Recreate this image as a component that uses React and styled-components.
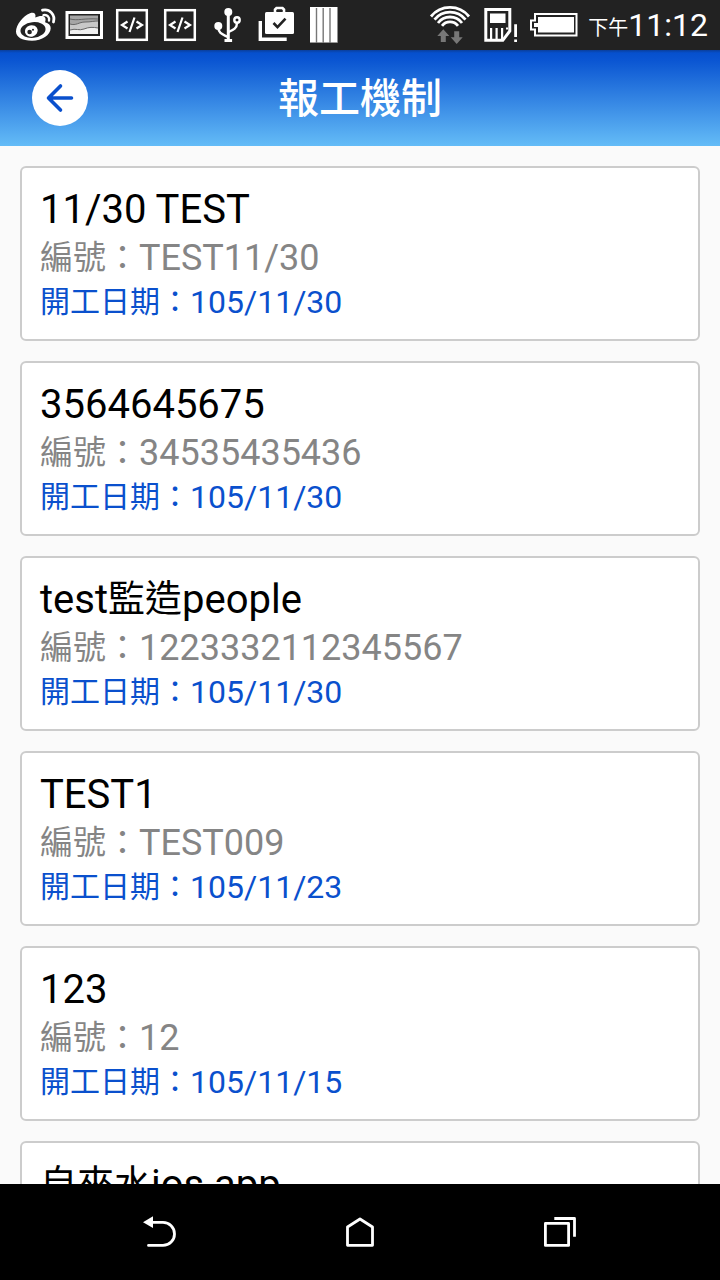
import React from "react";
import styled, { createGlobalStyle } from "styled-components";

const GlobalStyle = createGlobalStyle`
  *, *::before, *::after { box-sizing: border-box; }
  body {
    margin: 0;
    background: #fafafa;
    font-family: Roboto, "Noto Sans CJK TC", sans-serif;
  }
`;

const Screen = styled.div`
  display: flex;
  flex-direction: column;
  height: 100vh;
`;

const StatusBar = styled.div`
  display: flex;
  flex: none;
  align-items: center;
  justify-content: space-between;
  height: 50px;
  padding: 0 12px;
  background: #222;
  color: #fff;
`;

const StatusGroup = styled.div`
  display: flex;
  align-items: center;
`;

const StatusIcon = styled.svg`
  display: block;
  width: ${(p) => p.$width}px;
  height: 50px;
`;

const Clock = styled.time`
  margin-left: 8px;
  font-size: 32px;
  line-height: 50px;
  white-space: nowrap;
`;

const Cjk = styled.span`
  font-size: ${(p) => p.$size}px;
  line-height: 1;
  vertical-align: 1px;
`;

const Header = styled.header`
  display: grid;
  flex: none;
  grid-template-columns: 56px 1fr 56px;
  align-items: center;
  height: 96px;
  padding: 0 32px;
  background: linear-gradient(#0a3f9c 0, #0650ce 3px, #0a55d2 10px, #64bcf7 100%);
`;

const BackButton = styled.button`
  width: 56px;
  height: 56px;
  padding: 0;
  border: 0;
  border-radius: 50%;
  background: #fff;
  color: #0a50cd;
  cursor: pointer;

  svg { display: block; }
`;

const Title = styled.h1`
  margin: 0;
  padding-top: 2px;
  color: #fff;
  font-size: 41px;
  font-weight: 500;
  line-height: 56px;
  text-align: center;
`;

const List = styled.ul`
  display: flex;
  flex: 1;
  flex-direction: column;
  gap: 20px;
  min-height: 0;
  margin: 0;
  padding: 20px;
  overflow-y: auto;
  list-style: none;
  scrollbar-width: none;
`;

const Card = styled.a`
  display: block;
  padding: 18px 18px 17px;
  border: 2px solid #ccc;
  border-radius: 6px;
  background: #fff;
  color: #000;
  text-decoration: none;
`;

const CardTitle = styled.h2`
  margin: 0;
  font-size: 40px;
  font-weight: 400;
  line-height: 48px;
`;

const CardNumber = styled.p`
  margin: 0;
  color: #858585;
  font-size: 36px;
  line-height: 48px;
`;

const CardDate = styled.p`
  margin: 0;
  color: #0a50cd;
  font-size: 32px;
  line-height: 40px;
`;

const NavBar = styled.nav`
  display: flex;
  flex: none;
  height: 96px;
  padding: 0 60px;
  background: #000;
`;

const NavButton = styled.button`
  display: flex;
  flex: 1;
  align-items: center;
  justify-content: center;
  padding: 0;
  border: 0;
  background: none;
  color: #fff;
  cursor: pointer;
`;

const projects = [
  { title: "11/30 TEST", number: "TEST11/30", date: "105/11/30" },
  { title: "3564645675", number: "34535435436", date: "105/11/30" },
  { title: "test監造people", number: "1223332112345567", date: "105/11/30" },
  { title: "TEST1", number: "TEST009", date: "105/11/23" },
  { title: "123", number: "12", date: "105/11/15" },
  { title: "自來水ios app" },
];

// Sets runs of Han characters a little smaller than the Latin text around them.
function MixedText({ text, size }) {
  return text
    .split(/([\u4e00-\u9fff]+)/)
    .filter(Boolean)
    .map((run, i) =>
      /[\u4e00-\u9fff]/.test(run) ? (
        <Cjk key={i} $size={size}>{run}</Cjk>
      ) : (
        <React.Fragment key={i}>{run}</React.Fragment>
      )
    );
}

function WeiboIcon() {
  return (
    <StatusIcon $width={48} viewBox="0 0 48 50" fill="none" aria-hidden="true">
      <path
        d="M4 31.500C4 25 11 16 18 13.300c4-1.500 6.300.5 5.300 4.200 4-2 9-2.300 10 .5.600 1.700 0 3-.2 4.300 3.600 1 5.700 3 5.600 6C38.500 35 30 40.800 20 40.800S4 37 4 31.500z"
        fill="#fff"
      />
      <ellipse cx="21" cy="30" rx="12.600" ry="7.800" fill="#222" transform="rotate(-6 21 30)" />
      <ellipse cx="19.300" cy="30.900" rx="6.500" ry="5.700" fill="#fff" transform="rotate(-15 19.300 30.900)" />
      <circle cx="17.600" cy="32" r="2.300" fill="#222" />
      <circle cx="21" cy="29.800" r="1" fill="#222" />
      <path d="M30.500 10.200C37.500 8.500 43.500 14.500 41.500 22" stroke="#fff" strokeWidth="2.800" strokeLinecap="round" />
      <path d="M31.500 15.200c3.800-.8 6.300 2 5.500 5.300" stroke="#fff" strokeWidth="2.400" strokeLinecap="round" />
    </StatusIcon>
  );
}

function PictureIcon() {
  return (
    <StatusIcon $width={48} viewBox="0 0 48 50" aria-hidden="true">
      <rect x="7" y="12.500" width="34.500" height="25" fill="#222" stroke="#fff" strokeWidth="3" />
      <path d="M10 15.500h28V34H10z" fill="#a5a5a5" />
      <path d="M10 24c6 2 9-2 15-2s9-1 13-1v13H10z" fill="#c8c8c8" />
      <path d="M10 30c6-2 9 1 14-1s9-2 14-1v6H10z" fill="#eee" />
      <path d="M10 19c8 2 14-1 28 0M10 24c6 2 9-2 15-2s9-1 13-1M10 30c6-2 9 1 14-1s9-2 14-1" fill="none" stroke="#666" />
    </StatusIcon>
  );
}

function CodeIcon() {
  return (
    <StatusIcon $width={48} viewBox="0 0 48 50" fill="none" stroke="#fff" aria-hidden="true">
      <rect x="9.200" y="10.200" width="29.600" height="29.600" strokeWidth="2.500" />
      <path d="M19.500 21.500L14 25l5.500 3.500M26.500 17.500l-5 14.500M28.500 21.500L34 25l-5.500 3.500" strokeWidth="2.200" />
    </StatusIcon>
  );
}

function UsbIcon() {
  return (
    <StatusIcon $width={48} viewBox="0 0 48 50" fill="none" stroke="#fff" aria-hidden="true">
      <circle cx="24.300" cy="12" r="4" fill="#fff" stroke="none" />
      <circle cx="14.300" cy="26" r="4" fill="#fff" stroke="none" />
      <circle cx="33" cy="20" r="2.700" strokeWidth="2.400" />
      <path d="M24.300 12v28M20.500 40.500h7.600" strokeWidth="3" />
      <path d="M14.300 28c.5 6 5 6.500 9.500 9M33 23c0 5.500-4 7-8.500 9" strokeWidth="2.400" />
    </StatusIcon>
  );
}

function BagIcon() {
  return (
    <StatusIcon $width={48} viewBox="0 0 48 50" fill="none" aria-hidden="true">
      <path d="M8.300 21v18.300H34.700" stroke="#fff" strokeWidth="3.400" />
      <rect x="13" y="12" width="29" height="22" rx="1.500" fill="#fff" />
      <path d="M23 13V9.500l1.500-1.500h6l1.500 1.500V13" stroke="#fff" strokeWidth="2.600" />
      <path d="M21.500 23l4 4.200 8-8.500" stroke="#222" strokeWidth="2.600" />
    </StatusIcon>
  );
}

function StripesIcon() {
  return (
    <StatusIcon $width={48} viewBox="0 0 48 50" aria-hidden="true">
      <path d="M10 7h27.500v35.500H10z" fill="#fff" />
      <path d="M16.500 8v35M23.200 8v35M30 8v35" stroke="#777" strokeWidth="1.400" />
      <path d="M10 42.500h5.500M17.500 42.500h5M24 42.500h5M31 42.500h6.500" stroke="#999" />
    </StatusIcon>
  );
}

function WifiIcon() {
  return (
    <StatusIcon $width={52} viewBox="0 0 52 50" aria-hidden="true">
      <path
        d="M7 16.500A24.500 24.500 0 0 1 45 16.500M10.500 19.700A19.800 19.800 0 0 1 41.500 19.700M14 23A15 15 0 0 1 38 23M18 25.800A10.200 10.200 0 0 1 34 25.800"
        fill="none"
        stroke="#fff"
        strokeWidth="2.800"
      />
      <path d="M19.300 29.300l6 6.700h-3.500v6h-5v-6h-3.500zM30.200 31.200h5v6h3.500l-6 6.700-6-6.700h3.500z" fill="#777" />
    </StatusIcon>
  );
}

function SimIcon() {
  return (
    <StatusIcon $width={52} viewBox="0 0 52 50" aria-hidden="true">
      <path d="M9.800 9.500h24V31l-7 9.300h-17z" fill="none" stroke="#fff" strokeWidth="3" />
      <path d="M14 13.500h15.500V23H14zM14 28h2.200v11H14zM19.500 28h2.200v11h-2.200zM25 28h2.200v11H25zM38.200 24.300H41V37h-2.800zM38.200 39.500H41V42h-2.800z" fill="#fff" />
      <path d="M30 28.500h2" stroke="#fff" strokeWidth="2" />
    </StatusIcon>
  );
}

function BatteryIcon() {
  return (
    <StatusIcon $width={52} viewBox="0 0 52 50" aria-hidden="true">
      <path d="M7 14h41.500v21.500H7v-6H3v-9h4z" fill="none" stroke="#fff" strokeWidth="2" />
      <path d="M10 17h36v15.500H10v-5.500H6v-4h4z" fill="#fff" />
    </StatusIcon>
  );
}

function ProjectCard({ title, number, date }) {
  return (
    <li>
      <Card href="#">
        <CardTitle><MixedText text={title} size={37} /></CardTitle>
        {number && <CardNumber><Cjk $size={33}>編號：</Cjk>{number}</CardNumber>}
        {date && <CardDate><Cjk $size={30}>開工日期：</Cjk>{date}</CardDate>}
      </Card>
    </li>
  );
}

export default function App() {
  return (
    <Screen>
      <GlobalStyle />
      <StatusBar>
        <StatusGroup>
          <WeiboIcon />
          <PictureIcon />
          <CodeIcon />
          <CodeIcon />
          <UsbIcon />
          <BagIcon />
          <StripesIcon />
        </StatusGroup>
        <StatusGroup>
          <WifiIcon />
          <SimIcon />
          <BatteryIcon />
          <Clock><Cjk $size={20}>下午</Cjk>11:12</Clock>
        </StatusGroup>
      </StatusBar>
      <Header>
        <BackButton aria-label="返回">
          <svg width="56" height="56" viewBox="0 0 56 56" fill="none" stroke="currentColor" strokeWidth="3.600" strokeLinecap="round" strokeLinejoin="round">
            <path d="M39.500 28H17M28.500 16L16.500 28l12 12" />
          </svg>
        </BackButton>
        <Title>報工機制</Title>
      </Header>
      <List>
        {projects.map((project) => (
          <ProjectCard key={project.title} {...project} />
        ))}
      </List>
      <NavBar>
        <NavButton aria-label="上一頁">
          <svg width="40" height="40" viewBox="0 0 40 40" fill="none" stroke="currentColor" strokeWidth="2.800" strokeLinecap="round">
            <path d="M12 10.400h11a11.500 11.500 0 0 1 0 23H8.500" />
            <path d="M3 10.200l10-6v11.800z" fill="currentColor" stroke="none" />
          </svg>
        </NavButton>
        <NavButton aria-label="主畫面">
          <svg width="40" height="40" viewBox="0 0 40 40" fill="none" stroke="currentColor" strokeWidth="2.800" strokeLinejoin="round">
            <path d="M20 7l12.500 8v18.300h-25V15z" />
          </svg>
        </NavButton>
        <NavButton aria-label="最近使用">
          <svg width="40" height="40" viewBox="0 0 40 40" fill="none" stroke="currentColor" strokeWidth="2.800" strokeLinejoin="round">
            <path d="M5.400 11.400h23.200v22H5.400zM14.300 6.500h20.200v18.300" />
          </svg>
        </NavButton>
      </NavBar>
    </Screen>
  );
}
